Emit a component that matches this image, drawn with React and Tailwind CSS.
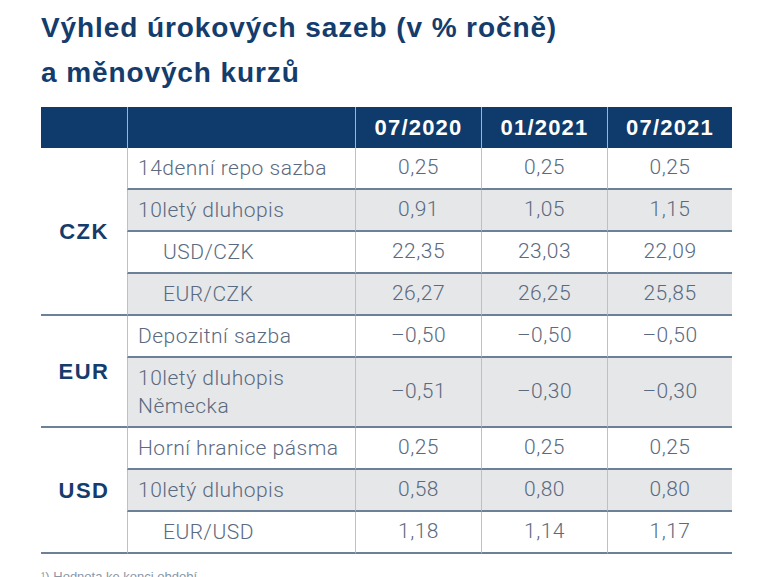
const groups = [
  {
    name: 'CZK',
    rows: [
      { label: '14denní repo sazba', values: ['0,25', '0,25', '0,25'] },
      { label: '10letý dluhopis', values: ['0,91', '1,05', '1,15'], shade: true },
      { label: 'USD/CZK', values: ['22,35', '23,03', '22,09'], indent: true },
      { label: 'EUR/CZK', values: ['26,27', '26,25', '25,85'], indent: true, shade: true },
    ],
  },
  {
    name: 'EUR',
    rows: [
      { label: 'Depozitní sazba', values: ['–0,50', '–0,50', '–0,50'] },
      { label: ['10letý dluhopis', 'Německa'], values: ['–0,51', '–0,30', '–0,30'], shade: true, tall: true },
    ],
  },
  {
    name: 'USD',
    rows: [
      { label: 'Horní hranice pásma', values: ['0,25', '0,25', '0,25'] },
      { label: '10letý dluhopis', values: ['0,58', '0,80', '0,80'], shade: true },
      { label: 'EUR/USD', values: ['1,18', '1,14', '1,17'], indent: true },
    ],
  },
]

const periods = ['07/2020', '01/2021', '07/2021']

export default function App() {
  return (
    <div className="min-h-[577px] bg-white pl-[41px] pt-[5px] font-['Liberation_Sans',Arial,sans-serif]">
      <h1 className="text-[28px] font-bold leading-[45px] tracking-[0.9px] text-[#143c6c]">
        Výhled úrokových sazeb (v % ročně)
        <br />
        a měnových kurzů
      </h1>

      <div className="mt-[12px] grid w-[691px] grid-cols-[86px_228px_126px_126px_125px]">
        {/* hlavička */}
        <div className="h-[41px] bg-[#0f3a6c]" />
        <div className="h-[41px] border-l border-[#9fb3cb] bg-[#0f3a6c]" />
        {periods.map((p) => (
          <div key={p} className="flex h-[41px] items-center justify-center border-l border-[#9fb3cb] bg-[#0f3a6c] text-[22px] font-bold tracking-[1.2px] text-white">
            {p}
          </div>
        ))}

        {groups.map((g) => (
          <Group key={g.name} group={g} />
        ))}
      </div>

      <div className="mt-[13px] text-[13px] text-[#8a97a8]">¹) Hodnota ke konci období</div>
    </div>
  )
}

function Group({ group }) {
  const span = { 2: 'row-span-2', 3: 'row-span-3', 4: 'row-span-4' }[group.rows.length]
  return (
    <>
      <div className={`${span} col-start-1 flex items-center justify-center border-b-2 border-[#6c8098] bg-white text-[22px] font-bold tracking-[1.5px] text-[#143c6c]`}>
        {group.name}
      </div>
      {group.rows.map((r, i) => {
        const bg = r.shade ? 'bg-[#e6e7e9]' : 'bg-white'
        const h = r.tall ? 'h-[70px]' : 'h-[42px]'
        return <Row key={i} r={r} bg={bg} h={h} />
      })}
    </>
  )
}

function Row({ r, bg, h }) {
  const cell = `${h} ${bg} border-b-2 border-b-[#6c8098] border-l-[1.5px] border-l-[#f1b57b]`
  const text = "font-['Roboto',sans-serif] text-[21px] font-light tracking-[0.5px] text-[#5a6a80]"
  return (
    <>
      <div className={`${cell} ${text} flex flex-col justify-center leading-[28px] ${r.indent ? 'pl-[35px]' : 'pl-[10px]'}`}>
        {Array.isArray(r.label) ? r.label.map((l) => <span key={l}>{l}</span>) : r.label}
      </div>
      {r.values.map((v, j) => (
        <div key={j} className={`${cell} ${text} flex items-center justify-center`}>
          {v}
        </div>
      ))}
    </>
  )
}
